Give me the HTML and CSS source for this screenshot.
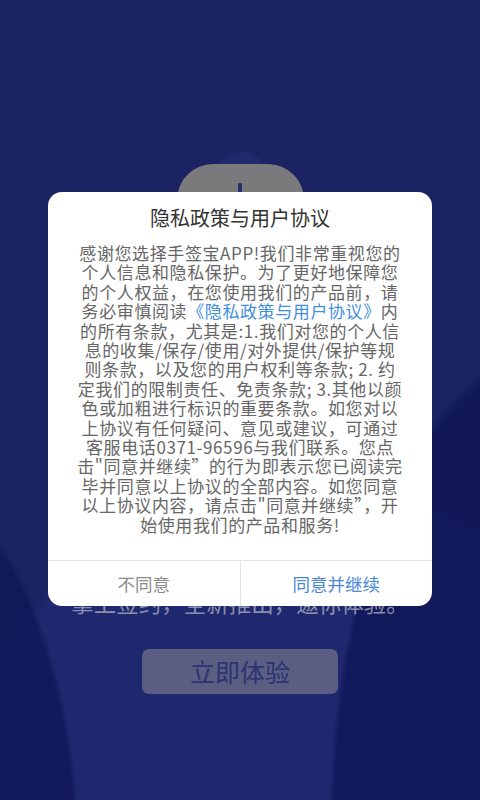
FILE: index.html
```html
<!DOCTYPE html>
<html lang="zh-CN">
<head>
<meta charset="utf-8">
<title>隐私政策与用户协议</title>
<link rel="stylesheet" href="styles.css">
</head>
<body>
<div class="screen">
  <div class="page">
    <div class="logo">
      <div class="logo-box"><div class="logo-line"></div></div>
    </div>
    <p class="tagline">掌上签约，全新推出，邀你体验。</p>
    <div class="cta">立即体验</div>
  </div>
  <div class="dialog">
    <h1 class="title">隐私政策与用户协议</h1>
    <p class="body">感谢您选择手签宝APP!我们非常重视您的<br>个人信息和隐私保护。为了更好地保障您<br>的个人权益，在您使用我们的产品前，请<br>务必审慎阅读<span class="link">《隐私政策与用户协议》</span>内<br>的所有条款，尤其是:1.我们对您的个人信<br>息的收集/保存/使用/对外提供/保护等规<br>则条款，以及您的用户权利等条款; 2. 约<br>定我们的限制责任、免责条款; 3.其他以颜<br>色或加粗进行标识的重要条款。如您对以<br>上协议有任何疑问、意见或建议，可通过<br>客服电话0371-96596与我们联系。您点<br>击"同意并继续”的行为即表示您已阅读完<br>毕并同意以上协议的全部内容。如您同意<br>以上协议内容，请点击"同意并继续”，开<br>始使用我们的产品和服务!</p>
    <div class="actions">
      <div class="btn btn-no">不同意</div>
      <div class="btn btn-yes">同意并继续</div>
    </div>
  </div>
</div>
</body>
</html>
```
FILE: styles.css
```css
* { box-sizing: border-box; }
html, body { margin: 0; padding: 0; }
body {
  font-family: "Noto Sans CJK SC", "Noto Sans", sans-serif;
  background: #1b2362;
}
.screen {
  position: relative;
  width: 480px;
  height: 800px;
  overflow: hidden;
  background:
    radial-gradient(ellipse 300px 620px at 560px 820px, rgba(14,20,84,0.75) 0%, rgba(14,20,84,0.75) 75%, rgba(14,20,84,0) 77%),
    radial-gradient(ellipse 260px 520px at -120px 860px, rgba(14,20,84,0.7) 0%, rgba(14,20,84,0.7) 75%, rgba(14,20,84,0) 77%),
    radial-gradient(ellipse 560px 700px at 300px 980px, rgba(36,46,122,0.5) 0%, rgba(36,46,122,0.5) 70%, rgba(36,46,122,0) 72%),
    linear-gradient(180deg, #1b2362 0%, #1b2363 60%, #1a2262 100%);
}
.page {
  padding-top: 152px;
  display: flex;
  flex-direction: column;
  align-items: center;
}
.logo {
  position: relative;
  width: 127px;
  height: 140px;
  padding-top: 12px;
}
.logo::before {
  content: "";
  position: absolute;
  left: 38px;
  top: 0;
  width: 52px;
  height: 52px;
  border-radius: 50%;
  background: #212a6b;
}
.logo-box {
  position: relative;
  height: 128px;
  background: #7a7a7c;
  border-radius: 36px 36px 10px 10px;
  display: flex;
  justify-content: center;
}
.logo-line {
  width: 4px;
  height: 12px;
  margin-top: 19px;
  background: #27306a;
  border-radius: 1px;
}
.tagline {
  margin: 297px 0 0;
  font-size: 22.5px;
  line-height: 26px;
  color: #8b8fae;
}
.cta {
  margin-top: 34px;
  width: 196px;
  height: 45px;
  border-radius: 7px;
  background: #5a5e80;
  color: #2c3372;
  font-size: 25px;
  line-height: 45px;
  text-align: center;
}
.dialog {
  position: absolute;
  left: 48px;
  top: 192px;
  width: 384px;
  background: #ffffff;
  border-radius: 14px;
  overflow: hidden;
}
.title {
  margin: 0;
  padding-top: 16px;
  font-size: 20px;
  line-height: 20px;
  font-weight: 400;
  color: #333333;
  text-align: center;
}
.body {
  margin: 15px 0 0;
  padding: 0 0 26px;
  font-size: 17px;
  letter-spacing: 0.6px;
  line-height: 19.4px;
  color: #666666;
  text-align: center;
  white-space: nowrap;
}
.link { color: #3f8ee0; }
.actions {
  display: flex;
  height: 46px;
  border-top: 1px solid #e4e4e4;
}
.btn {
  flex: 1;
  display: flex;
  align-items: center;
  justify-content: center;
  font-size: 17.5px;
}
.btn-no { color: #8c8c8c; border-right: 1px solid #e4e4e4; }
.btn-yes { color: #4a87d2; }
```
